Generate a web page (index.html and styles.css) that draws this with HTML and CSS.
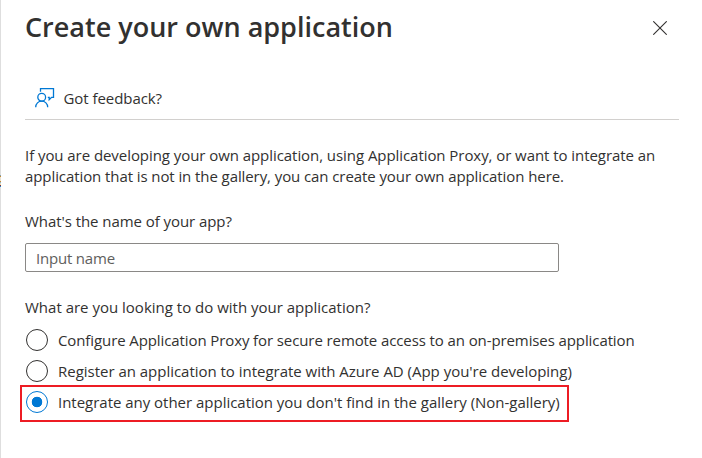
FILE: index.html
```
<!DOCTYPE html>
<html lang="en">
<head>
  <meta charset="UTF-8" />
  <title>Create your own application</title>
  <link rel="stylesheet" href="styles.css">
</head>
<body>
  <div class="panel">
    <header class="panel-header">
      <h1>Create your own application</h1>
      <button class="close-btn" type="button" aria-label="Close">
        <svg width="14" height="14" viewBox="0 0 14 14">
          <path d="M0.3 0.3 L13.7 13.7 M13.7 0.3 L0.3 13.7" />
        </svg>
      </button>
    </header>

    <div class="toolbar">
      <svg class="feedback-icon" width="20" height="20" viewBox="0 0 20 20">
        <path d="M5.5 3.8 V0.7 H18.5 V9.4 H16.6 L14.2 11.8 V9.4 H12.8" />
        <circle cx="6.7" cy="9.3" r="3.9" />
        <path d="M0.7 19.2 C0.7 15.6 3.4 13.2 6.7 13.2 S12.7 15.6 12.7 19.2" />
      </svg>
      <span class="feedback-text">Got feedback?</span>
    </div>

    <p class="intro">If you are developing your own application, using Application Proxy, or want to integrate an<br><span class="intro-end">application that is not in the gallery, you can create your own application here.</span></p>

    <label class="field-label" for="appName">What's the name of your app?</label>
    <input type="text" id="appName" placeholder="Input name">

    <div class="question">What are you looking to do with your application?</div>
    <div class="options">
      <label class="option">
        <input type="radio" name="appType">
        <span class="text-proxy">Configure Application Proxy for secure remote access to an on-premises application</span>
      </label>
      <label class="option">
        <input type="radio" name="appType">
        <span class="text-register">Register an application to integrate with Azure AD (App you're developing)</span>
      </label>
      <label class="option highlight">
        <input type="radio" name="appType" checked>
        <span class="text-other">Integrate any other application you don't find in the gallery (Non-gallery)</span>
      </label>
    </div>
  </div>
</body>
</html>
```

FILE: styles.css
```
* {
  box-sizing: border-box;
}
body {
  margin: 0;
  background: #fff;
  color: #323130;
  font-family: "Segoe UI", "Open Sans", sans-serif;
  font-size: 15px;
  line-height: 21px;
  overflow: hidden;
}
.panel {
  position: relative;
  height: 458px;
  padding: 8px 23px 0 24px;
  border-left: 1px solid #dedede;
  white-space: nowrap;
}
/* sliver of the page behind the panel */
.panel::before {
  content: "";
  position: absolute;
  left: -1px;
  top: 175px;
  width: 1px;
  height: 12px;
  background: linear-gradient(#7f9fb0 0 1px, #c98a2b 1px 2px, #e8e0d0 2px 6px, #c98a2b 6px 7px, #8fb8d0 7px 8px, #e8dcb8 8px 10px, #8a3030 10px 11px, #1a86d0 11px);
}
.panel-header {
  display: flex;
  justify-content: space-between;
  height: 69px;
}
h1 {
  margin: 0;
  font-size: 27px;
  line-height: 38px;
  font-weight: 600;
}
.close-btn {
  width: 14px;
  height: 14px;
  margin: 13px 12px 0 0;
  padding: 0;
  border: none;
  background: none;
}
svg {
  display: block;
  fill: none;
}
.close-btn svg {
  stroke: #323130;
  stroke-width: 1.1;
}
.toolbar {
  display: flex;
  align-items: center;
  height: 43px;
  padding-left: 10px;
  gap: 8.5px;
  border-bottom: 1px solid #d2d0ce;
}
.feedback-icon {
  stroke: #0078d4;
  stroke-width: 1.3;
}
.feedback-text {
  letter-spacing: -0.06px;
}
.intro {
  margin: 25px 0 24px;
  letter-spacing: -0.06px;
}
.intro-end {
  letter-spacing: -0.085px;
}
.field-label {
  display: block;
  letter-spacing: -0.06px;
}
input[type="text"] {
  display: block;
  width: 534px;
  height: 29px;
  margin: 11px 0 25px;
  padding: 0 10px;
  border: 1px solid #8a8886;
  border-radius: 2px;
  font: inherit;
  letter-spacing: -0.2px;
}
input::placeholder {
  color: #605e5c;
}
.options {
  margin-top: 6px;
}
.option {
  display: flex;
  align-items: center;
  gap: 10px;
  height: 31px;
  padding-left: 1px;
}
input[type="radio"] {
  appearance: none;
  flex: none;
  width: 22px;
  height: 22px;
  margin: 0;
  border: 1px solid #323130;
  border-radius: 50%;
}
input[type="radio"]:checked {
  border-color: #0078d4;
  background: radial-gradient(circle, #0078d4 5px, transparent 5.6px);
}
.text-proxy,
.text-register {
  padding-top: 2px;
}
.text-proxy {
  letter-spacing: -0.1px;
}
.text-register,
.text-other {
  letter-spacing: -0.02px;
}
.highlight {
  width: 549px;
  height: 37px;
  margin: -1px 0 0 -5px;
  padding: 0 0 3px 4px;
  border: 2px solid #ed1c24;
}
```
